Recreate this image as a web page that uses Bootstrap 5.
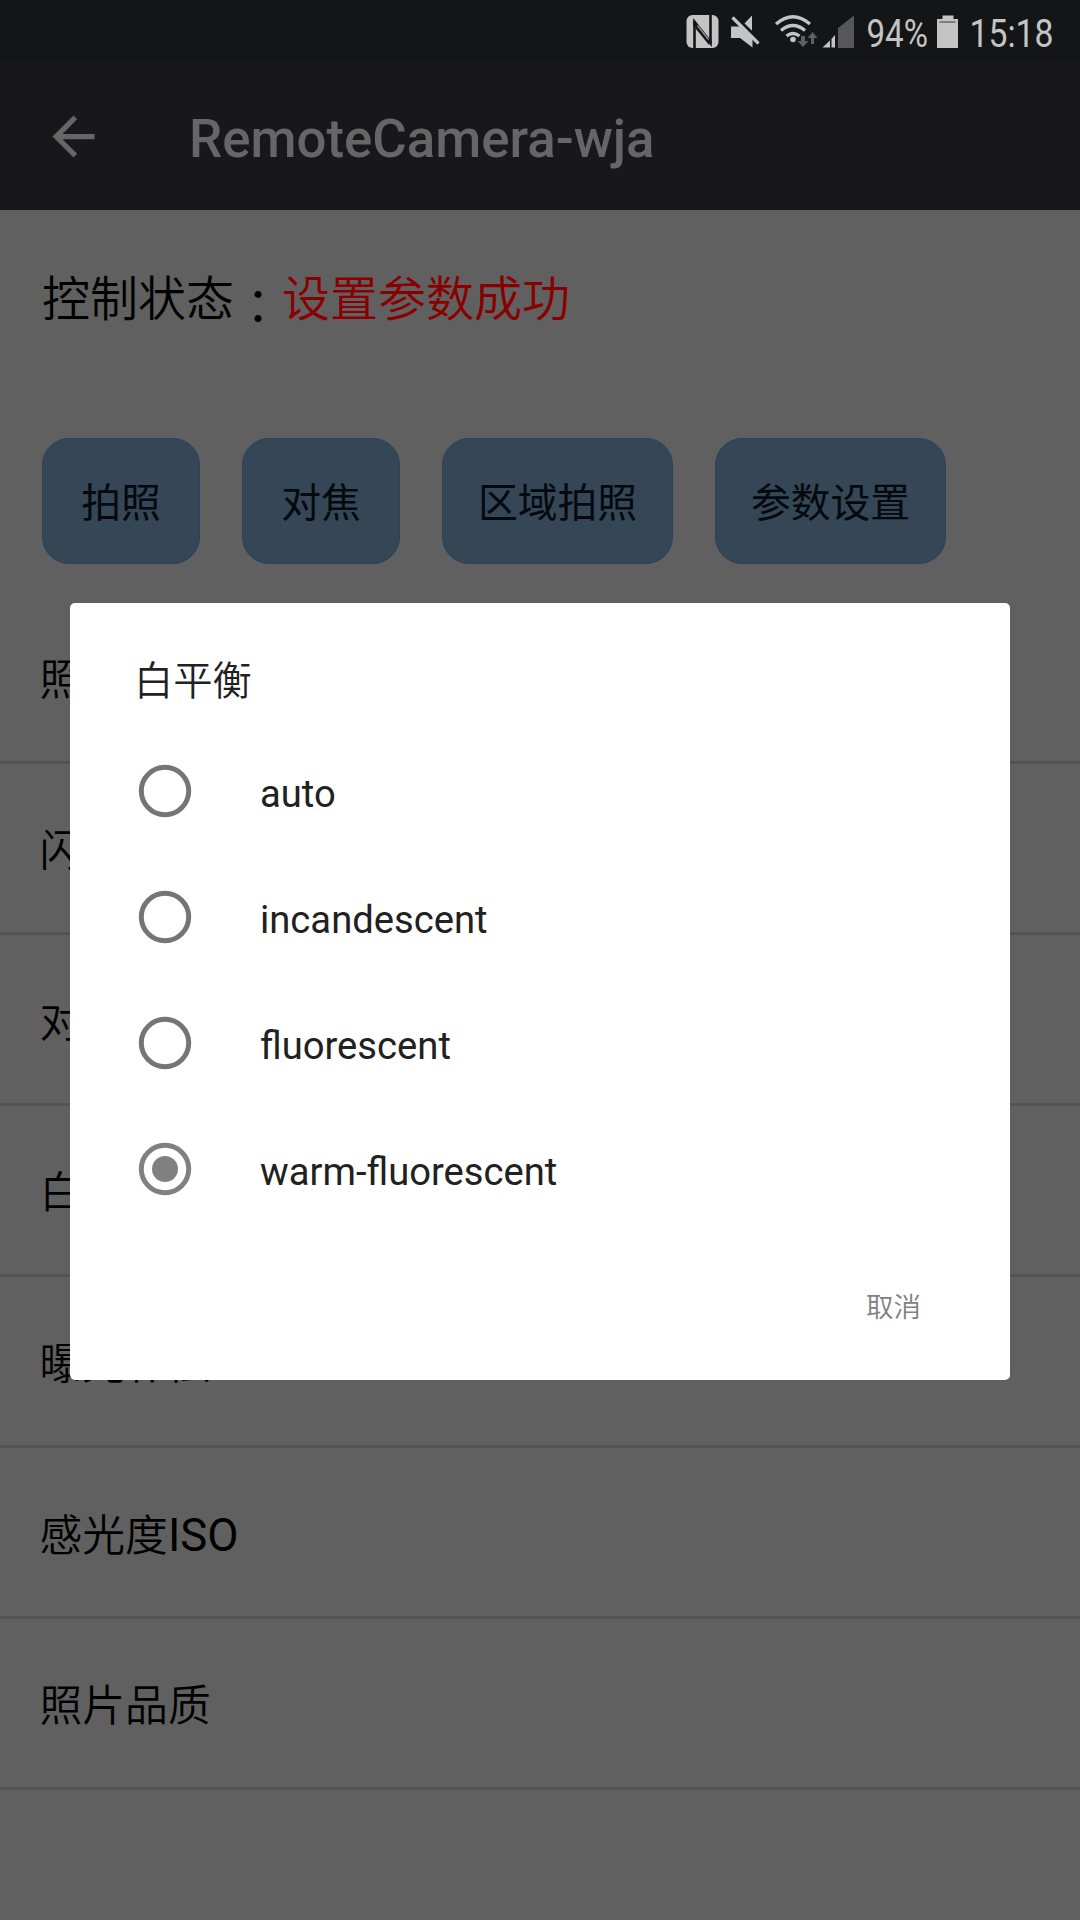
<!DOCTYPE html>
<html lang="zh-CN">
<head>
<meta charset="utf-8">
<meta name="viewport" content="width=device-width, initial-scale=1">
<title>RemoteCamera-wja</title>
<link rel="stylesheet" href="https://cdn.jsdelivr.net/npm/bootstrap@5.3.0/dist/css/bootstrap.min.css">
<style>
body{background:#606060;color:#000;font-family:Roboto,"Noto Sans CJK SC",sans-serif;line-height:1}
.phone{width:1080px;height:1920px}
.statusbar{height:62px;background:#141517}
.appbar{height:148px;background:#18181a;color:#666;padding-left:42px}
.apptitle{font-size:52.8px;font-weight:500;margin-left:84px;line-height:62px;padding-top:5px}
.cjk{font-family:Roboto,"Noto Sans CJK SC",sans-serif;font-weight:350}
.state{height:228px;padding:60px 0 0 42px;font-size:48px;line-height:60px}
.state>span{line-height:60px}
.state .result{color:#8a0000}
.colon{font-family:"Noto Sans CJK TC",sans-serif;padding-top:3px}
.actions{gap:42px;padding-left:42px;height:155px}
.actions .btn{height:126px;border-radius:27px;background:#354656;border:1px solid #2a4259;color:#04090e;font-size:39.8px;line-height:1;padding:5px 0 0}
.short{width:158px}
.long{width:231px}
.settings .list-group-item{height:171px;border:0;border-bottom:3px solid #545454;background:transparent;color:#000;font-size:42.8px;padding:7px 0 0 39.5px}
.settings .list-group-item:last-child{border-bottom:3px solid #545454}
.latin{font-size:45.5px;font-weight:400;line-height:43px}
.dialog{left:70px;top:603px;width:940px;height:777px;border-radius:5px;color:#212121;padding:49px 65px 0}
.dialog h2{font-size:39.3px;line-height:60px;height:76px;margin:0 0 0 -1px;font-weight:350}
.option{height:126px;gap:65px;font-size:38.2px}
.option span{padding-top:6px}
.cancel{font-size:27.5px;color:#808080;line-height:40px;padding:56px 24px 0 0}
</style>
<script src="https://cdn.jsdelivr.net/npm/bootstrap@5.3.0/dist/js/bootstrap.bundle.min.js"></script>
</head>
<body>
<div class="phone position-relative overflow-hidden">
  <header class="statusbar d-flex">
    <svg width="1080" height="62" viewBox="0 0 1080 62" fill="#c4c4c4">
      <rect x="686.5" y="15" width="32" height="33" rx="6"/>
      <path d="M694.500 48V21M710.500 43V15" fill="none" stroke="#141517" stroke-width="2.600"/>
      <path d="M693.200 18L711.800 41.500V47L693.200 25z" fill="#141517"/>
      <path d="M696 29L709 45V41L698 27.500" fill="#141517"/>
      <path d="M697.500 25.500L708.500 39.500" stroke="#8c8c8d" stroke-width="1.600"/>
      <path d="M731 26.500h9l12.500 12V47.500L740 38h-9zM743.500 24.500l8.500-9V31z"/>
      <path d="M735.500 16.200l25.500 25.500" stroke="#141517" stroke-width="2.500"/>
      <path d="M732.500 17.500l26 26" stroke="#c4c4c4" stroke-width="3.200"/>
      <g fill="none" stroke="#c4c4c4" stroke-width="3.300"><path d="M776 24q17-14.500 34 0M781 30.500q12-10 24 0M786.500 36q6.500-5 13 0"/></g>
      <circle cx="793" cy="39.500" r="2.800"/>
      <path d="M801 36h4v5h3.500l-5.500 6-5.500-6h3.500zM811 44v-6h-3.500l5-6 5 6H814v6z" fill="#606062"/>
      <path d="M838 28L854 15.500V48h-16z" fill="#57575a"/>
      <path d="M822.500 47.500l7.500-7v7zM831.500 39l3.500-4v12.500h-3.500z"/>
      <text x="866.500" y="46.800" font-size="39" textLength="61.500" lengthAdjust="spacingAndGlyphs">94%</text>
      <path d="M942.500 15.500h11V19h4.500v29h-21V19h5.500z"/><path d="M939.500 22h16" stroke="#666" stroke-width="1.500"/>
      <text x="969.500" y="46.800" font-size="39" textLength="84" lengthAdjust="spacingAndGlyphs">15:18</text>
    </svg>
  </header>
  <nav class="appbar d-flex align-items-center">
    <svg width="63" height="63" viewBox="0 0 24 24" fill="#666"><path d="M20 11H7.830l5.590-5.590L12 4l-8 8 8 8 1.410-1.410L7.830 13H20z"/></svg>
    <div class="apptitle">RemoteCamera-wja</div>
  </nav>
  <main>
    <div class="state cjk d-flex align-items-start"><span>控制状态</span><span class="colon" lang="zh-TW">：</span><span class="result">设置参数成功</span></div>
    <div class="actions d-flex cjk">
      <button class="btn short">拍照</button>
      <button class="btn short">对焦</button>
      <button class="btn long">区域拍照</button>
      <button class="btn long">参数设置</button>
    </div>
    <ul class="settings list-group list-group-flush cjk">
      <li class="list-group-item d-flex align-items-center">照片尺寸</li>
      <li class="list-group-item d-flex align-items-center">闪光灯</li>
      <li class="list-group-item d-flex align-items-center">对焦模式</li>
      <li class="list-group-item d-flex align-items-center">白平衡</li>
      <li class="list-group-item d-flex align-items-center">曝光补偿</li>
      <li class="list-group-item d-flex align-items-center"><div>感光度<span class="latin">ISO</span></div></li>
      <li class="list-group-item d-flex align-items-center">照片品质</li>
    </ul>
  </main>
  <section class="dialog position-absolute bg-white" role="dialog">
    <h2 class="cjk">白平衡</h2>
    <div class="option d-flex align-items-center"><svg width="60" height="60" viewBox="0 0 60 60" fill="none" stroke="#757575" stroke-width="5"><circle cx="30" cy="30" r="23.700"/></svg><span>auto</span></div>
    <div class="option d-flex align-items-center"><svg width="60" height="60" viewBox="0 0 60 60" fill="none" stroke="#757575" stroke-width="5"><circle cx="30" cy="30" r="23.700"/></svg><span>incandescent</span></div>
    <div class="option d-flex align-items-center"><svg width="60" height="60" viewBox="0 0 60 60" fill="none" stroke="#757575" stroke-width="5"><circle cx="30" cy="30" r="23.700"/></svg><span>fluorescent</span></div>
    <div class="option d-flex align-items-center"><svg width="60" height="60" viewBox="0 0 60 60" fill="none" stroke="#808080" stroke-width="5"><circle cx="30" cy="30" r="23.700"/><circle cx="30" cy="30" r="13" fill="#808080" stroke="none"/></svg><span>warm-fluorescent</span></div>
    <div class="cancel cjk text-end">取消</div>
  </section>
</div>
</body>
</html>
